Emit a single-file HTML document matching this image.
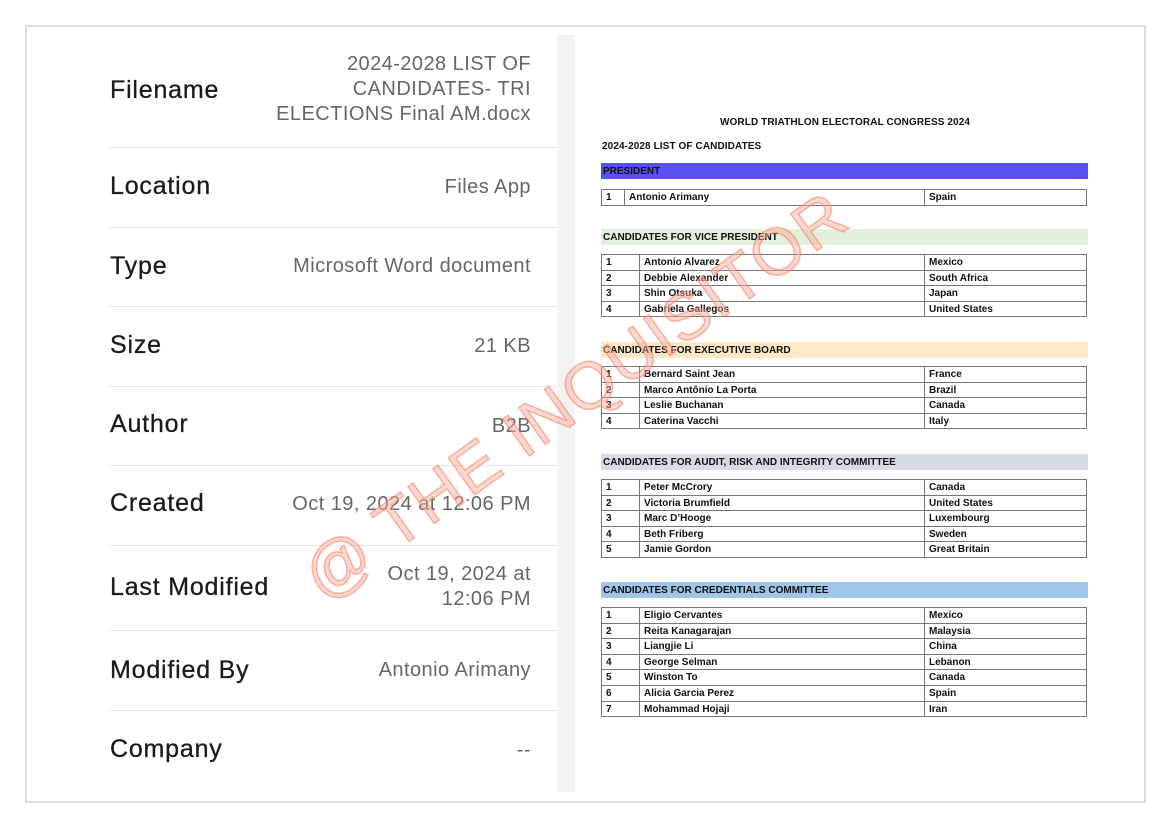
<!DOCTYPE html>
<html><head><meta charset="utf-8"><style>
*{margin:0;padding:0;box-sizing:border-box}
body{width:1169px;height:826px;background:#fff;position:relative;overflow:hidden;font-family:"Liberation Sans",sans-serif}
.frame{position:absolute;left:25px;top:25px;width:1121px;height:778px;border:2px solid #ddd}
.card{position:absolute;left:82px;top:35px;width:476px;height:757px;background:#fff;border-radius:10px}
.strip{position:absolute;left:557px;top:35px;width:18px;height:757px;background:#f3f3f3}
.lab{position:absolute;left:110px;font-size:25px;color:#1a1a1a;letter-spacing:0.8px;-webkit-text-stroke:0.3px #1a1a1a}
.val{position:absolute;right:638px;font-size:20px;color:#666;text-align:right;line-height:25px;letter-spacing:0.45px}
.div{position:absolute;left:108px;width:450px;height:1px;background:#e8e8e8}
.doc{position:absolute;font-size:10px;font-weight:bold;color:#111;letter-spacing:0.1px}
.bar{position:absolute;left:601px;width:487px;height:16px;font-size:10px;font-weight:bold;padding-left:2px;line-height:17px;color:#111}
table{position:absolute;left:601px;width:486px;border-collapse:collapse;font-size:10px;font-weight:bold;color:#111}
td{border:1px solid #777;height:15.6px;padding:1px 4px 0;line-height:13.5px;white-space:nowrap}
td:nth-child(1){width:38px}
td:nth-child(3){width:162px}
.wm{position:absolute;left:575px;top:395px;transform:translate(-50%,-50%) rotate(-35.5deg);font-size:66px;color:rgba(250,170,150,0.45);-webkit-text-stroke:1.5px rgba(245,130,110,0.6);white-space:nowrap;letter-spacing:2px}
</style></head><body>
<div class="frame"></div>
<div class="card"></div>
<div class="strip"></div>

<div class="lab" style="top:76px">Filename</div>
<div class="val" style="top:52px">2024-2028 LIST OF<br>CANDIDATES- TRI<br>ELECTIONS Final AM.docx</div>
<div class="div" style="top:147px"></div>
<div class="lab" style="top:172px">Location</div>
<div class="val" style="top:175px">Files App</div>
<div class="div" style="top:227px"></div>
<div class="lab" style="top:252px">Type</div>
<div class="val" style="top:254px">Microsoft Word document</div>
<div class="div" style="top:306px"></div>
<div class="lab" style="top:331px">Size</div>
<div class="val" style="top:334px">21 KB</div>
<div class="div" style="top:386px"></div>
<div class="lab" style="top:410px">Author</div>
<div class="val" style="top:414px">B2B</div>
<div class="div" style="top:465px"></div>
<div class="lab" style="top:489px">Created</div>
<div class="val" style="top:492px">Oct 19, 2024 at 12:06 PM</div>
<div class="div" style="top:545px"></div>
<div class="lab" style="top:573px">Last Modified</div>
<div class="val" style="top:562px">Oct 19, 2024 at<br>12:06 PM</div>
<div class="div" style="top:630px"></div>
<div class="lab" style="top:656px">Modified By</div>
<div class="val" style="top:658px">Antonio Arimany</div>
<div class="div" style="top:710px"></div>
<div class="lab" style="top:735px">Company</div>
<div class="val" style="top:738px">--</div>

<div class="doc" style="left:720px;top:117px">WORLD TRIATHLON ELECTORAL CONGRESS 2024</div>
<div class="doc" style="left:602px;top:141px">2024-2028 LIST OF CANDIDATES</div>

<div class="bar" style="top:163px;background:#5850f0">PRESIDENT</div>
<table style="top:189px"><tr><td style="width:23px">1</td><td>Antonio Arimany</td><td>Spain</td></tr></table>

<div class="bar" style="top:229px;background:#e2efda">CANDIDATES FOR VICE PRESIDENT</div>
<table style="top:254px">
<tr><td>1</td><td>Antonio Alvarez</td><td>Mexico</td></tr>
<tr><td>2</td><td>Debbie Alexander</td><td>South Africa</td></tr>
<tr><td>3</td><td>Shin Otsuka</td><td>Japan</td></tr>
<tr><td>4</td><td>Gabriela Gallegos</td><td>United States</td></tr></table>

<div class="bar" style="top:342px;background:#fce8c5">CANDIDATES FOR EXECUTIVE BOARD</div>
<table style="top:366px">
<tr><td>1</td><td>Bernard Saint Jean</td><td>France</td></tr>
<tr><td>2</td><td>Marco Antônio La Porta</td><td>Brazil</td></tr>
<tr><td>3</td><td>Leslie Buchanan</td><td>Canada</td></tr>
<tr><td>4</td><td>Caterina Vacchi</td><td>Italy</td></tr></table>

<div class="bar" style="top:454px;background:#d6dce4">CANDIDATES FOR AUDIT, RISK AND INTEGRITY COMMITTEE</div>
<table style="top:479px">
<tr><td>1</td><td>Peter McCrory</td><td>Canada</td></tr>
<tr><td>2</td><td>Victoria Brumfield</td><td>United States</td></tr>
<tr><td>3</td><td>Marc D’Hooge</td><td>Luxembourg</td></tr>
<tr><td>4</td><td>Beth Friberg</td><td>Sweden</td></tr>
<tr><td>5</td><td>Jamie Gordon</td><td>Great Britain</td></tr></table>

<div class="bar" style="top:582px;background:#9fc5e8">CANDIDATES FOR CREDENTIALS COMMITTEE</div>
<table style="top:607px">
<tr><td>1</td><td>Eligio Cervantes</td><td>Mexico</td></tr>
<tr><td>2</td><td>Reita Kanagarajan</td><td>Malaysia</td></tr>
<tr><td>3</td><td>Liangjie Li</td><td>China</td></tr>
<tr><td>4</td><td>George Selman</td><td>Lebanon</td></tr>
<tr><td>5</td><td>Winston To</td><td>Canada</td></tr>
<tr><td>6</td><td>Alicia Garcia Perez</td><td>Spain</td></tr>
<tr><td>7</td><td>Mohammad Hojaji</td><td>Iran</td></tr></table>

<div class="wm">@ THE INQUISITOR</div>
</body></html>
